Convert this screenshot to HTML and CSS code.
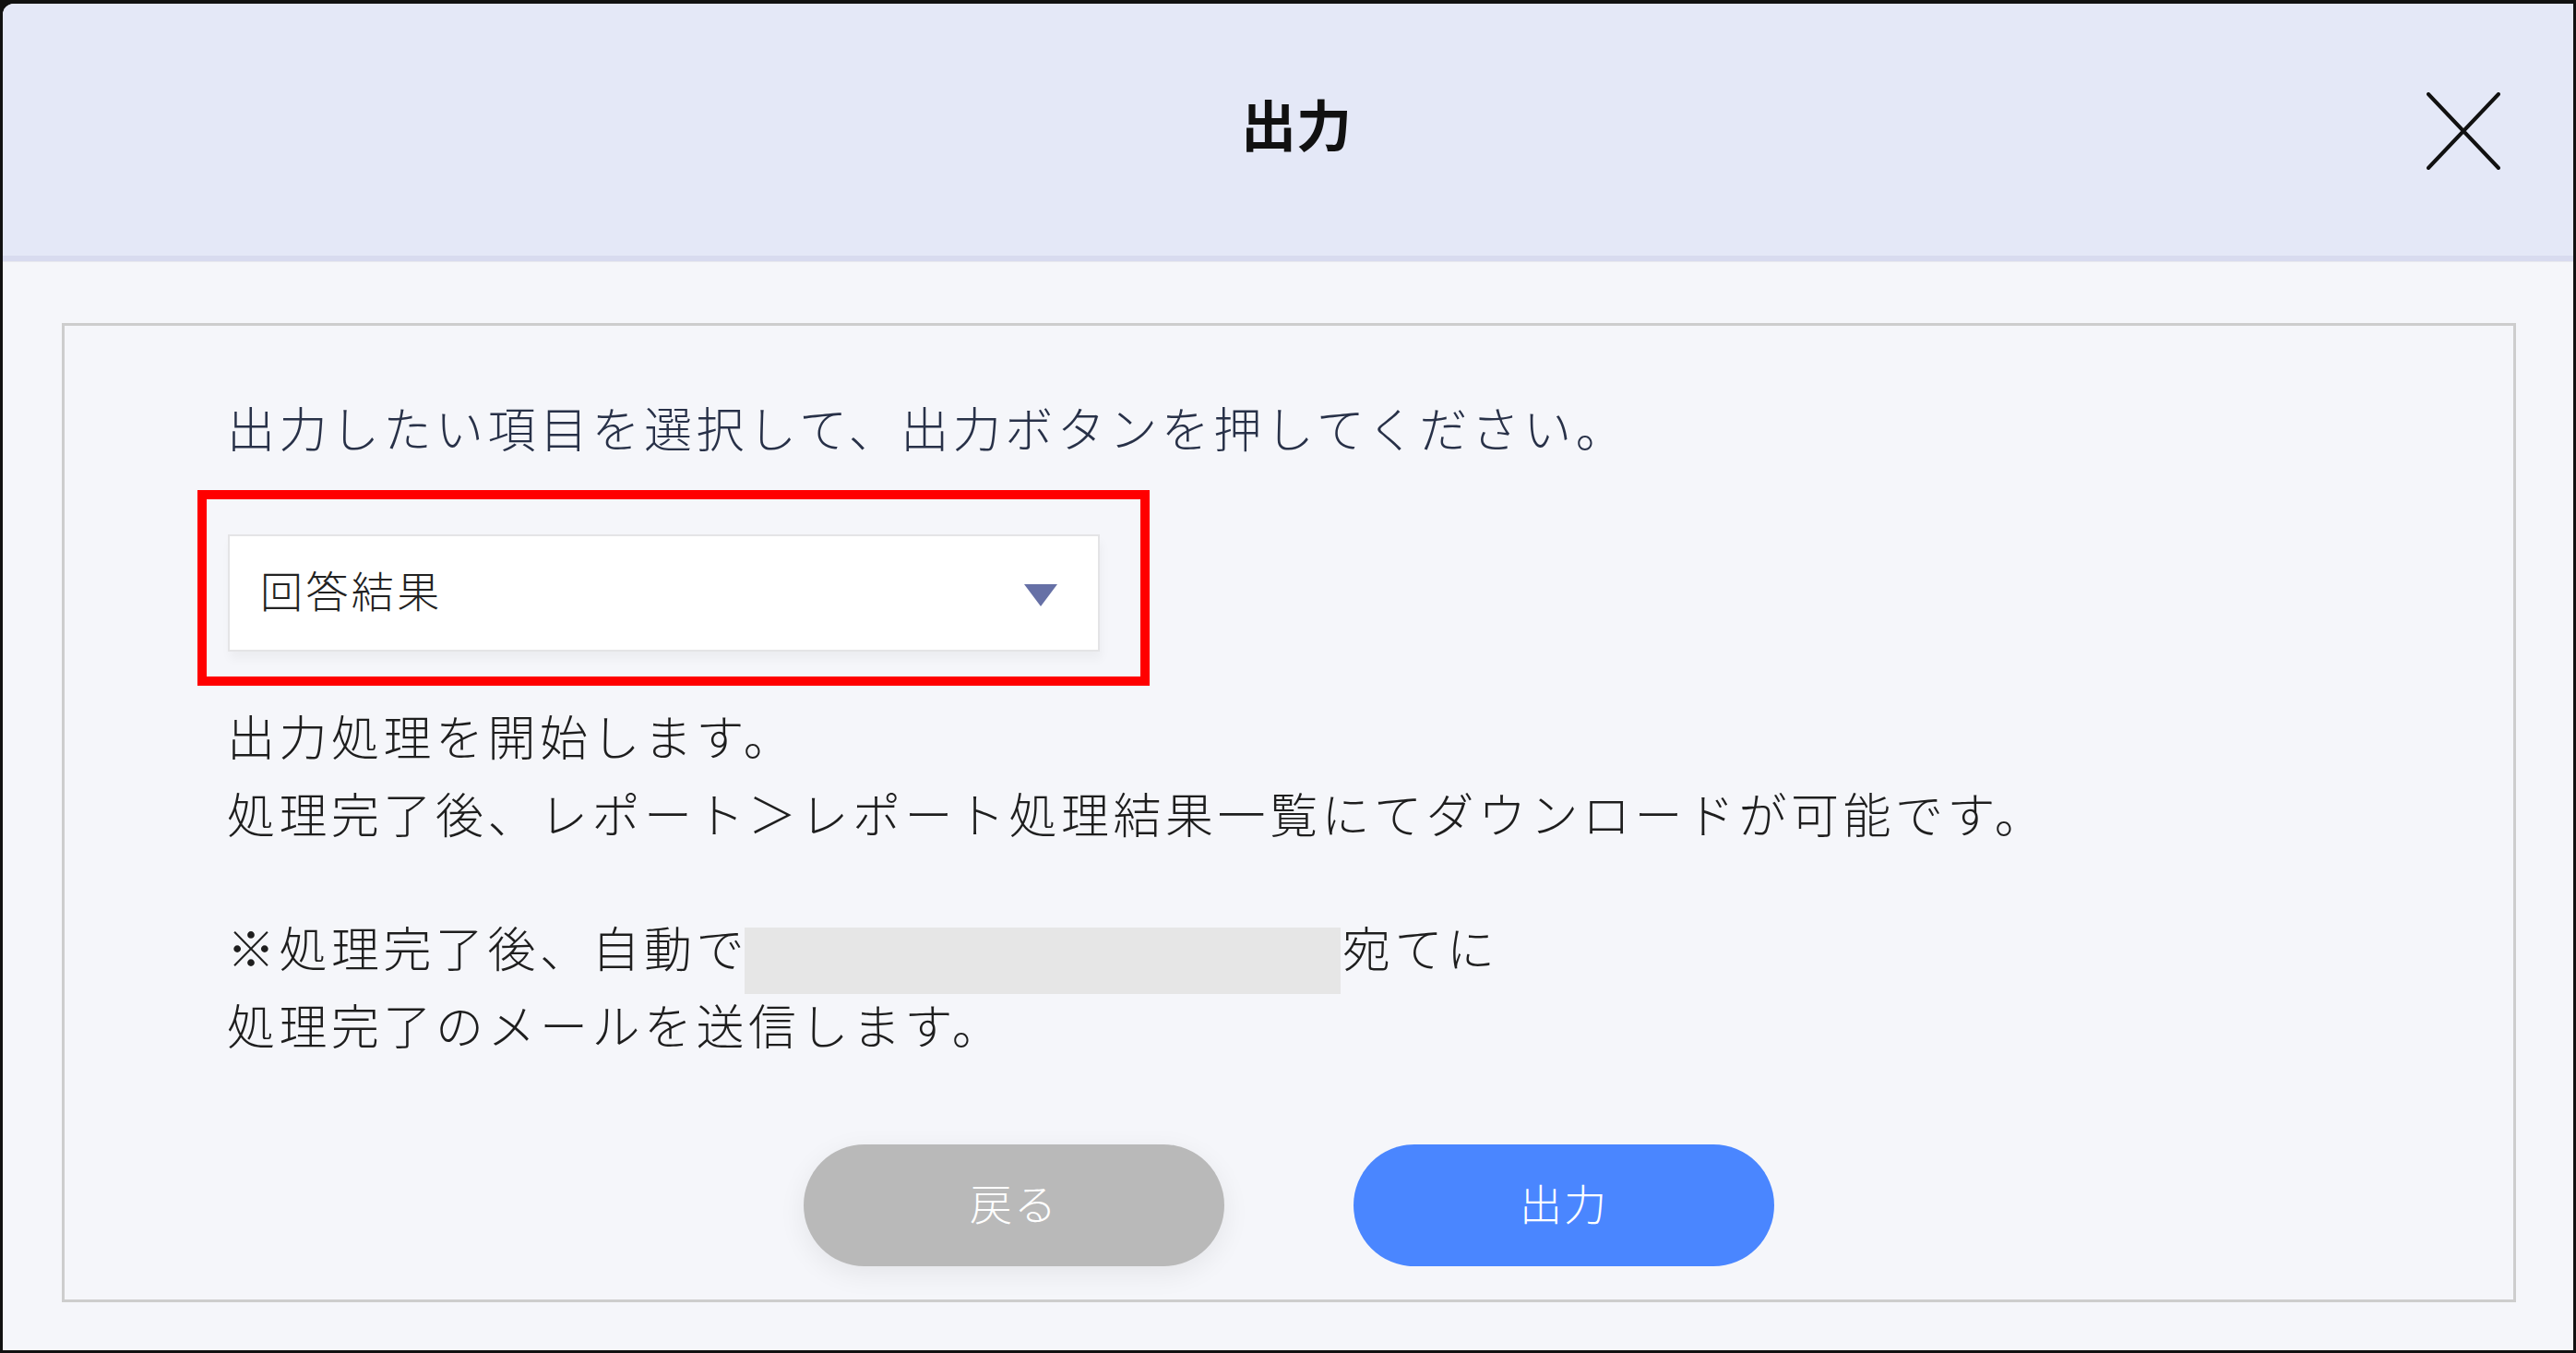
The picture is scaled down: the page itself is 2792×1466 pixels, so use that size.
FILE: index.html
```html
<!DOCTYPE html>
<html lang="ja">
<head>
    <meta charset="UTF-8">
    <meta name="viewport" content="width=device-width, initial-scale=1.0">
    <title>出力</title>
    <link rel="stylesheet" href="styles.css">
</head>
<body>
    <div class="frame">
        <div class="dialog">
            <header class="dialog-header">
                <h3>出力</h3>
                <button class="close-button" aria-label="閉じる">
                    <svg width="80" height="84" viewBox="0 0 80 84">
                        <path d="M2 2 L78 82 M78 2 L2 82" stroke="#111" stroke-width="4" stroke-linecap="round" fill="none"/>
                    </svg>
                </button>
            </header>

            <div class="dialog-body">
                <div class="panel">
                    <div class="content">
                        <p class="lead">出力したい項目を選択して、出力ボタンを押してください。</p>

                        <!-- highlighted select -->
                        <div class="highlight">
                            <div class="select">
                                <span>回答結果</span>
                                <svg width="36" height="24" viewBox="0 0 36 24">
                                    <path d="M0 0 H36 L18 24 Z" fill="#6670a6"/>
                                </svg>
                            </div>
                        </div>

                        <div class="notes">
                            <p>出力処理を開始します。<br>処理完了後、レポート＞レポート処理結果一覧にてダウンロードが可能です。</p>
                            <p class="mail">※処理完了後、自動で<span class="redact"></span>宛てに<br>処理完了のメールを送信します。</p>
                        </div>
                    </div>

                    <div class="actions">
                        <button class="btn btn-back">戻る</button>
                        <button class="btn btn-submit">出力</button>
                    </div>
                </div>
            </div>
        </div>
    </div>
</body>
</html>
```

FILE: styles.css
```css
html, body {
    margin: 0;
    padding: 0;
}

body {
    font-family: "Noto Sans CJK JP", "Noto Sans", sans-serif;
    background-color: #111;
}

.frame {
    box-sizing: border-box;
    width: 2792px;
    height: 1466px;
    border: 3px solid #111;
    border-top-width: 4px;
    background-color: #111;
}

.dialog {
    height: 100%;
    display: flex;
    flex-direction: column;
    background-color: #f5f6fa;
    border-top-left-radius: 12px;
    overflow: hidden;
}

.dialog-header {
    position: relative;
    box-sizing: border-box;
    height: 279px;
    flex-shrink: 0;
    display: flex;
    align-items: center;
    justify-content: center;
    padding: 0 0 16px 18px;
    background-color: #e4e8f7;
    border-bottom: 6px solid #d8dbef;
}

.dialog-header h3 {
    margin: 0;
    font-size: 60px;
    font-weight: bold;
    color: #111;
    line-height: 1;
}

.close-button {
    position: absolute;
    top: 96px;
    right: 79px;
    padding: 0;
    border: none;
    background: none;
    line-height: 0;
    cursor: pointer;
}

.dialog-body {
    flex: 1;
    display: flex;
    padding: 67px 62px 52px 64px;
    box-shadow: inset 0 1px 0 #e8e8ee;
}

.panel {
    flex: 1;
    border: 3px solid #cdcdcd;
    padding: 68px 0 36px;
}

.content {
    padding-left: 176px;
}

.lead {
    margin: 0;
    font-size: 52px;
    letter-spacing: 4.5px;
    line-height: 84px;
    font-weight: 300;
    color: #283148;
}

.highlight {
    width: fit-content;
    margin: 26px 0 0 -32px;
    padding: 38px 44px 27px 23px;
    border: 10px solid #ff0000;
}

.select {
    box-sizing: border-box;
    width: 945px;
    height: 127px;
    display: flex;
    align-items: center;
    justify-content: space-between;
    padding: 0 44px 10px 33px;
    background-color: white;
    border: 2px solid #e4e4e6;
    box-shadow: 2px 8px 10px rgba(0, 0, 0, 0.04);
    font-size: 46px;
    letter-spacing: 3.4px;
    font-weight: 300;
    color: #222;
}

.select svg {
    margin-top: 14px;
}

.notes {
    margin-top: 12px;
}

.notes p {
    margin: 0;
    font-size: 52px;
    letter-spacing: 4.5px;
    line-height: 84px;
    font-weight: 300;
    color: #1e1e1e;
}

.notes .mail {
    margin-top: 61px;
}

.redact {
    display: inline-block;
    width: 646px;
    height: 72px;
    background-color: #e6e6e6;
    vertical-align: -17px;
    margin: 0 2px -12px -4px;
}

.actions {
    display: flex;
    justify-content: center;
    gap: 140px;
    margin-top: 88px;
}

.btn {
    width: 456px;
    height: 132px;
    padding: 0 0 8px;
    border: none;
    border-radius: 66px;
    font-family: inherit;
    font-size: 46px;
    letter-spacing: 2px;
    font-weight: 300;
    color: white;
    cursor: pointer;
}

.btn-back {
    background-color: #b9b9b9;
    box-shadow: 0 8px 30px rgba(0, 0, 0, 0.07);
}

.btn-submit {
    background-color: #4a86ff;
}
```
